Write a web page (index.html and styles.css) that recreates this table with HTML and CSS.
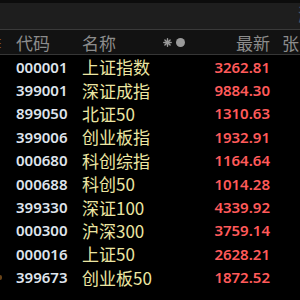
FILE: index.html
```html
<!DOCTYPE html>
<html lang="zh">
<head>
<meta charset="utf-8">
<link rel="stylesheet" href="styles.css">
</head>
<body>
<div class="app">
  <div class="topbar"><span class="top-edge">涨</span></div>
  <div class="row head">
    <span class="edge">≡</span>
    <span class="code">代码</span>
    <span class="name">名称<span class="icons"><svg width="9" height="9" viewBox="0 0 9 9"><g stroke="#9a9a9a" stroke-width="1.4" stroke-linecap="round"><line x1="4.5" y1="0.8" x2="4.5" y2="8.2"/><line x1="0.8" y1="4.5" x2="8.2" y2="4.5"/><line x1="1.9" y1="1.9" x2="7.1" y2="7.1"/><line x1="7.1" y1="1.9" x2="1.9" y2="7.1"/></g><circle cx="4.5" cy="4.5" r="2" fill="#9a9a9a"/></svg><span class="dot"></span></span></span>
    <span class="price">最新</span>
    <span class="chg">张</span>
  </div>
  <div class="list">
    <div class="row"><span class="edge"></span><span class="code">000001</span><span class="name">上证指数</span><span class="price">3262.81</span><span class="chg"></span></div>
    <div class="row"><span class="edge"></span><span class="code">399001</span><span class="name">深证成指</span><span class="price">9884.30</span><span class="chg"></span></div>
    <div class="row"><span class="edge"></span><span class="code">899050</span><span class="name">北证50</span><span class="price">1310.63</span><span class="chg"></span></div>
    <div class="row"><span class="edge"></span><span class="code">399006</span><span class="name">创业板指</span><span class="price">1932.91</span><span class="chg"></span></div>
    <div class="row"><span class="edge"></span><span class="code">000680</span><span class="name">科创综指</span><span class="price">1164.64</span><span class="chg"></span></div>
    <div class="row"><span class="edge"></span><span class="code">000688</span><span class="name">科创50</span><span class="price">1014.28</span><span class="chg"></span></div>
    <div class="row"><span class="edge"></span><span class="code">399330</span><span class="name">深证100</span><span class="price">4339.92</span><span class="chg"></span></div>
    <div class="row"><span class="edge"></span><span class="code">000300</span><span class="name">沪深300</span><span class="price">3759.14</span><span class="chg"></span></div>
    <div class="row"><span class="edge"></span><span class="code">000016</span><span class="name">上证50</span><span class="price">2628.21</span><span class="chg"></span></div>
    <div class="row"><span class="edge"><span class="mark"></span></span><span class="code">399673</span><span class="name">创业板50</span><span class="price">1872.52</span><span class="chg"></span></div>
  </div>
</div>
</body>
</html>
```
FILE: styles.css
```css
* {
  box-sizing: border-box;
}
html, body {
  margin: 0;
  padding: 0;
  background: #000;
}
.app {
  width: 300px;
  height: 300px;
  overflow: hidden;
  background: #000;
  font-family: "Noto Sans", "Noto Sans CJK SC", sans-serif;
}
.topbar {
  height: 30px;
  border-top: 3px solid #0c0c0c;
  background: #1e1e1e;
  border-bottom: 1px solid #3a3a3a;
  display: flex;
  justify-content: flex-end;
  overflow: hidden;
}
.top-edge {
  font-family: "Noto Sans CJK SC", sans-serif;
  font-size: 17px;
  line-height: 22px;
  color: #4a5a70;
  margin-right: -15px;
}
.row {
  display: flex;
  align-items: center;
  height: 23.4px;
}
.head {
  height: 25px;
  background: #121212;
  border-bottom: 1px solid #363636;
  color: #8c8c8c;
  font-family: "Noto Sans CJK SC", sans-serif;
  font-size: 17px;
}
.edge {
  width: 16px;
  flex: none;
  display: flex;
  align-items: center;
  overflow: hidden;
}
.head .edge {
  justify-content: flex-end;
  padding-right: 13px;
  font-size: 17px;
  color: #8a5a28;
  white-space: nowrap;
}
.mark {
  width: 2px;
  height: 5px;
  background: #6a4418;
  border-radius: 0 2px 2px 0;
}
.code {
  width: 66px;
  flex: none;
  font-size: 15px;
  font-weight: 600;
  color: #dfe4ec;
}
.head .code {
  font-size: 17px;
  font-weight: 400;
  color: #8c8c8c;
}
.name {
  flex: 1;
  min-width: 0;
  display: flex;
  align-items: center;
  font-family: "Noto Sans CJK SC", sans-serif;
  font-size: 17px;
  color: #ece6a2;
  white-space: nowrap;
}
.head .name {
  color: #8c8c8c;
}
.icons {
  margin-left: auto;
  margin-right: 15px;
  display: flex;
  align-items: center;
  gap: 4px;
}
.dot {
  width: 9px;
  height: 9px;
  border-radius: 50%;
  background: #9a9a9a;
}
.price {
  width: 70px;
  flex: none;
  text-align: right;
  font-size: 15px;
  font-weight: 600;
  color: #ff5a5a;
}
.head .price {
  font-size: 17px;
  font-weight: 400;
  color: #8c8c8c;
}
.chg {
  width: 30px;
  flex: none;
  padding-left: 12px;
  white-space: nowrap;
  overflow: hidden;
}
```
